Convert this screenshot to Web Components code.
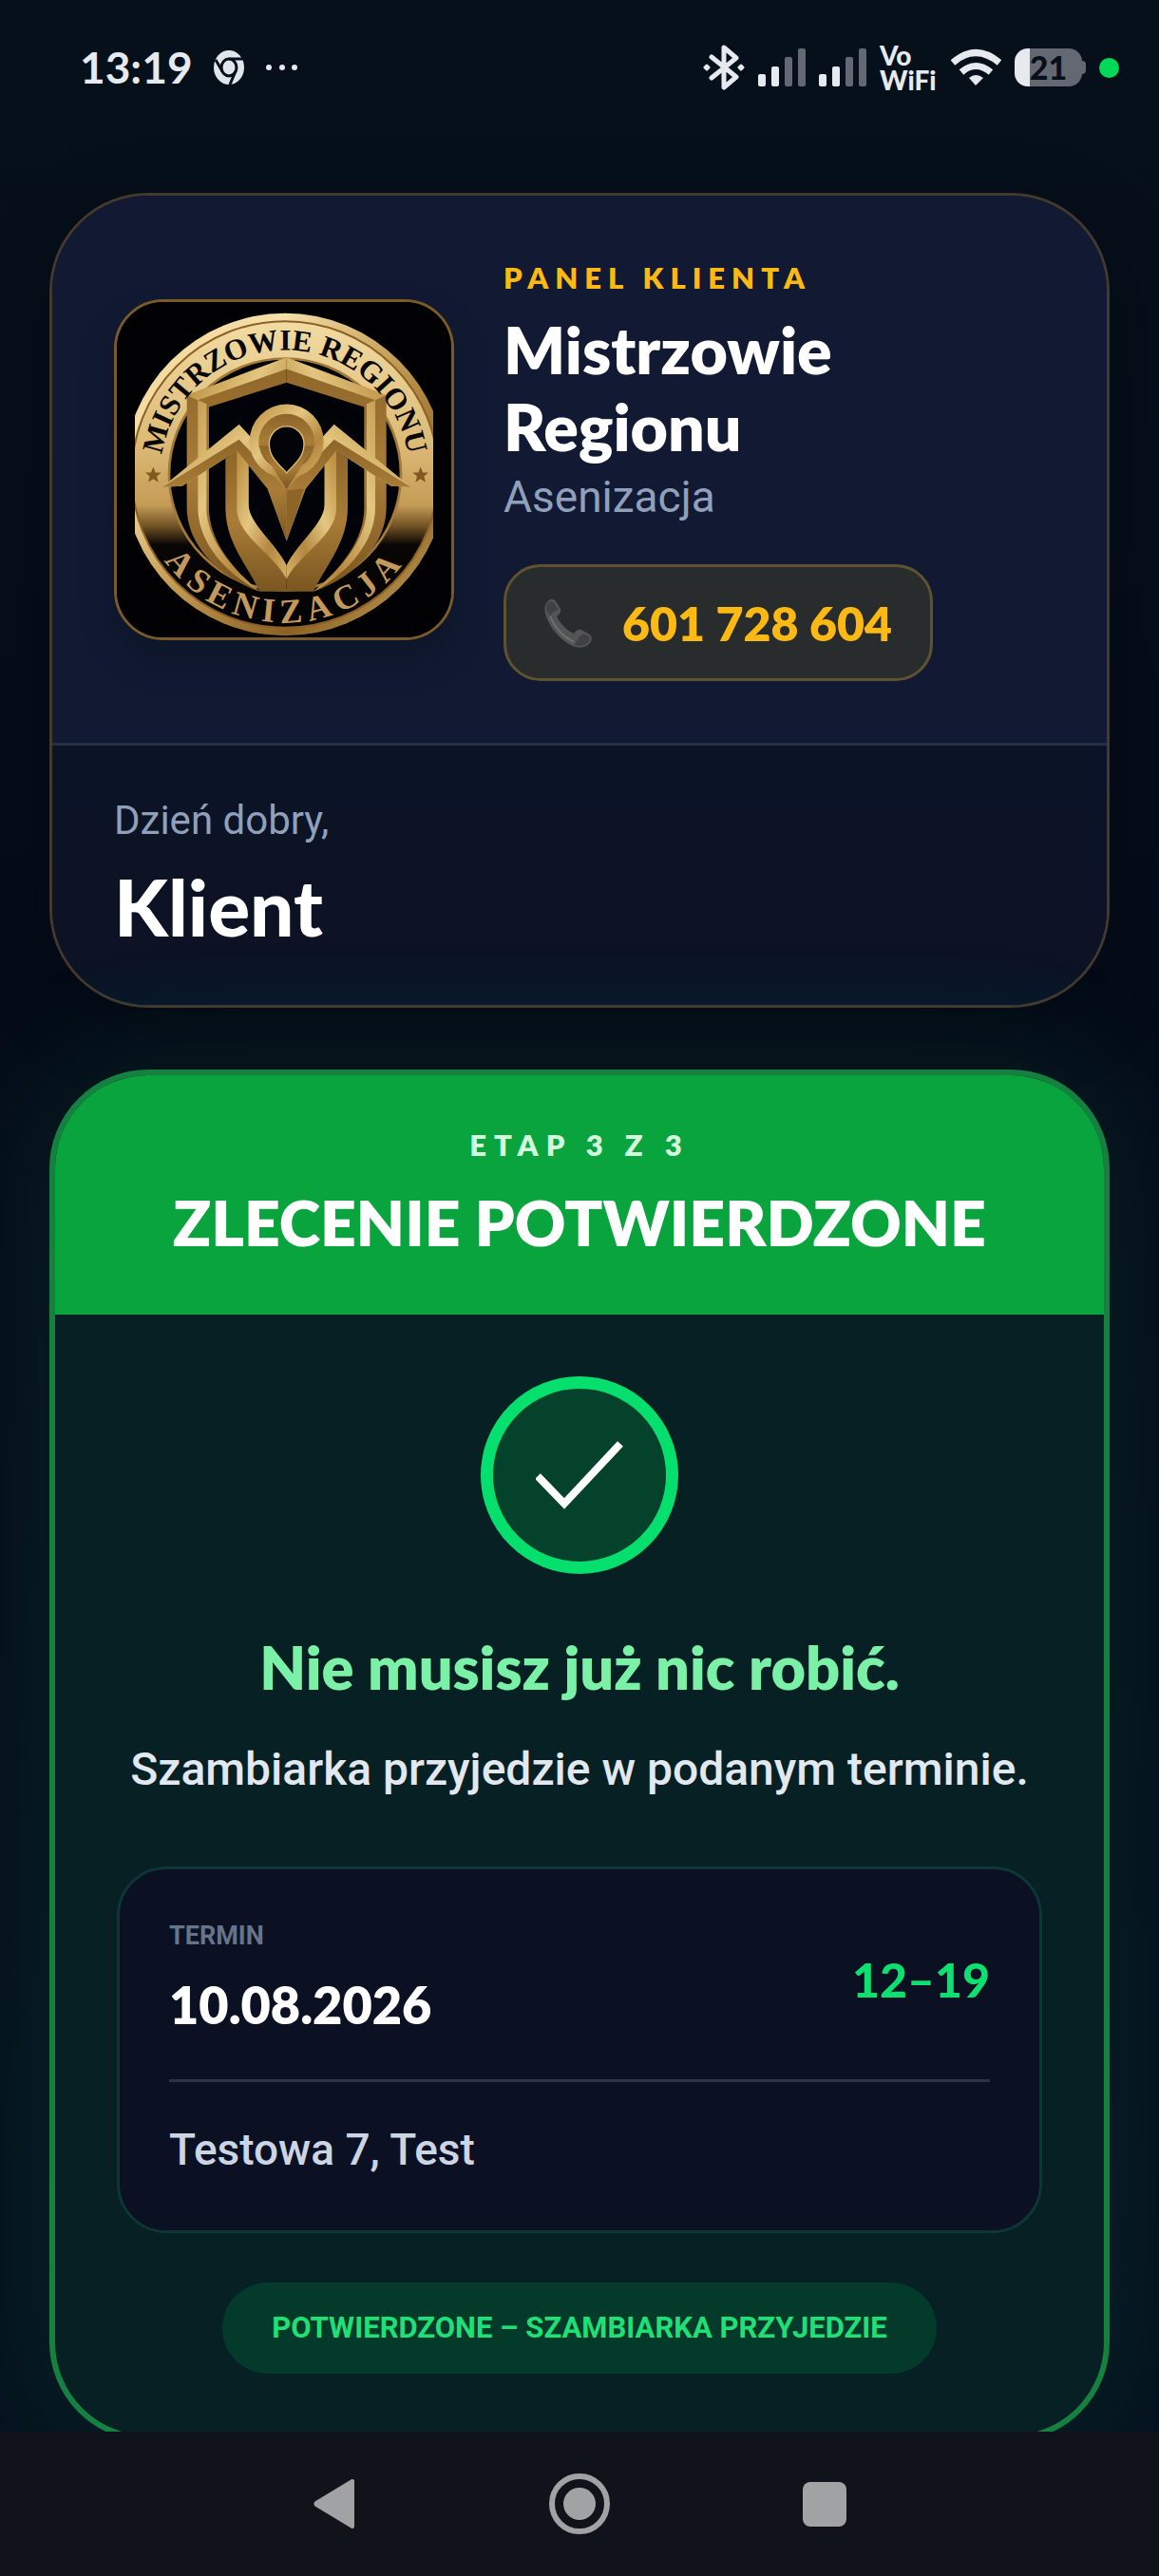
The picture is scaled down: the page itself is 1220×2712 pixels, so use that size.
<!DOCTYPE html>
<html lang="pl">
<head>
<meta charset="utf-8">
<meta name="viewport" content="width=device-width, initial-scale=1">
<title>Mistrzowie Regionu - panel klienta</title>
<style>
    html, body {
        height: 100%;
    }

    body {
        background: linear-gradient(#06101a, #040c19 40%, #04121f);
        color: #fff;
        display: flex;
        flex-direction: column;
        font-family: Lato, "Noto Sans", sans-serif;
        margin: 0;
        --text-font: Roboto, "Noto Sans", sans-serif;
    }

    main {
        display: flex;
        flex: 1;
        flex-direction: column;
        gap: 65px;
        min-height: 0;
        overflow-y: auto;
        padding: 61px 52px 0;
        scrollbar-width: none;
    }
</style>
</head>
<body>
<status-bar time="13:19" battery="21"></status-bar>
<main>
    <client-card phone="601 728 604">
        <brand-logo slot="logo"></brand-logo>
        <span slot="label">PANEL KLIENTA</span>
        <span slot="title">Mistrzowie Regionu</span>
        <span slot="subtitle">Asenizacja</span>
        <span slot="hello">Dzień dobry,</span>
        <span slot="name">Klient</span>
    </client-card>
    <stage-card>
        <span slot="step">ETAP 3 Z 3</span>
        <span slot="title">ZLECENIE POTWIERDZONE</span>
        <span slot="lead">Nie musisz już nic robić.</span>
        <span slot="text">Szambiarka przyjedzie w podanym terminie.</span>
        <visit-box slot="visit" date="10.08.2026" hours="12–19">Testowa 7, Test</visit-box>
        <span slot="badge">POTWIERDZONE – SZAMBIARKA PRZYJEDZIE</span>
    </stage-card>
</main>
<nav-bar></nav-bar>

<script>
class BaseElement extends HTMLElement {
    constructor() {
        super()
        this.attachShadow({ mode: 'open' });
    }

    render() {
        this.shadowRoot.innerHTML = `
            <style>
                * { box-sizing: border-box; margin: 0; }
                svg { display: block; }
                ${this.Css()}
            </style>
            ${this.HTML()}
        `;
    }

    connectedCallback() {
        this.render();
    }
}

// Top system bar
class StatusBar extends BaseElement {
    signal() {
        return `
        <svg width="50" height="40" viewBox="0 0 50 40" fill="#e6eaee">
            <rect x="0" y="27" width="8" height="13" rx="2"/>
            <rect x="14" y="19" width="8" height="21" rx="2"/>
            <rect x="28" y="9" width="8" height="31" rx="2" fill="#636873"/>
            <rect x="42" y="0" width="8" height="40" rx="2" fill="#636873"/>
        </svg>`
    }

    HTML() {
        return `
        <div class="side">
            <span class="time">${this.getAttribute('time')}</span>
            <svg width="32" height="38" viewBox="0 0 32 38">
                <ellipse cx="16" cy="19" rx="16" ry="18" fill="#e0e5ec"/>
                <g fill="none" stroke="#07101a" stroke-width="3">
                    <ellipse cx="16" cy="19" rx="8" ry="9"/>
                    <path d="M16 10H31M9 23L2 11M23 23L17 37"/>
                </g>
            </svg>
            <svg width="36" height="8" viewBox="0 0 36 8" fill="#e6eaee">
                <circle cx="4" cy="4" r="3"/><circle cx="18" cy="4" r="3"/><circle cx="31" cy="4" r="3"/>
            </svg>
        </div>
        <div class="side icons">
            <svg width="44" height="48" viewBox="0 0 44 48" fill="none" stroke="#e6eaee" stroke-width="5" stroke-linejoin="round" stroke-linecap="round">
                <path d="M9 13L35 34L22 45V3L35 14L9 35"/>
                <path d="M4 22L6 24L4 26L2 24ZM40 22L42 24L40 26L38 24Z" stroke-width="3" fill="#e6eaee"/>
            </svg>
            ${this.signal()}
            ${this.signal()}
            <span class="vowifi">Vo<br>WiFi</span>
            <svg width="53" height="40" viewBox="0 0 53 40" fill="none" stroke="#e6eaee" stroke-width="7">
                <path d="M2 15Q26 -6 51 15"/>
                <path d="M11 25Q26 12 42 25"/>
                <path d="M26 39L19 31Q26 25 34 31Z" fill="#e6eaee" stroke="none"/>
            </svg>
            <span class="battery">${this.getAttribute('battery')}</span>
            <span class="dot"></span>
        </div>
    `
    }

    Css() {
        return `
        :host {
            align-items: center;
            color: #e6eaee;
            display: flex;
            flex: none;
            height: 142px;
            justify-content: space-between;
            padding: 0 42px 0 84px;
            box-sizing: border-box;
        }
        .side { align-items: center; display: flex; gap: 22px; }
        .icons { gap: 14px; }
        .time { font: 700 46px/60px Lato, sans-serif; }
        .vowifi { font: 900 28px/26px Lato, sans-serif; width: 61px; }
        .battery {
            background: linear-gradient(90deg, #e6eaee 16px, #636873 16px);
            border-radius: 14px;
            color: #07101a;
            font: 900 34px/40px Lato, sans-serif;
            height: 40px;
            position: relative;
            text-align: center;
            width: 71px;
        }
        .battery::after {
            background: #636873;
            border-radius: 0 4px 4px 0;
            content: "";
            height: 14px;
            left: 70px;
            position: absolute;
            top: 13px;
            width: 5px;
        }
        .dot {
            background: #00d857;
            border-radius: 50%;
            height: 21px;
            margin-left: 4px;
            width: 21px;
        }
    `;
    }
}

// Round gold emblem on a black tile
class BrandLogo extends BaseElement {
    HTML() {
        return `
        <svg viewBox="69 52 1056 1056" role="img" aria-label="Mistrzowie Regionu Asenizacja">
            <defs>
                <linearGradient id="rim" x1="0" y1="0" x2="1" y2="1">
                    <stop offset="0" stop-color="#f0d496"/>
                    <stop offset=".25" stop-color="#f5dfa9"/>
                    <stop offset=".5" stop-color="#c39a51"/>
                    <stop offset=".75" stop-color="#8a6224"/>
                    <stop offset="1" stop-color="#d9b56c"/>
                </linearGradient>
                <linearGradient id="band" x1="0" y1="0" x2="0" y2="1">
                    <stop offset="0" stop-color="#f2dba2"/>
                    <stop offset=".4" stop-color="#dcba76"/>
                    <stop offset=".6" stop-color="#c49c56"/>
                    <stop offset=".67" stop-color="#6e5023"/>
                    <stop offset=".73" stop-color="#080604"/>
                    <stop offset="1" stop-color="#030304"/>
                </linearGradient>
                <linearGradient id="light" x1="0" y1="0" x2="1" y2="1">
                    <stop offset="0" stop-color="#b8893b"/>
                    <stop offset=".4" stop-color="#e3c680"/>
                    <stop offset=".7" stop-color="#b5873f"/>
                    <stop offset="1" stop-color="#d6b168"/>
                </linearGradient>
                <linearGradient id="dark" x1="0" y1="0" x2="0" y2="1">
                    <stop offset="0" stop-color="#8d6529"/>
                    <stop offset=".5" stop-color="#a97d38"/>
                    <stop offset="1" stop-color="#7a5520"/>
                </linearGradient>
                <clipPath id="crop"><rect x="126" y="52" width="942" height="1056"/></clipPath>
                <path id="star" d="M0 -26L7 -8L25 -8L11 4L16 23L0 12L-16 23L-11 4L-25 -8L-7 -8Z"/>
                <path id="top" d="M207 595A393 393 0 0 1 993 595"/>
                <path id="bottom" d="M132 595A468 468 0 0 0 1068 595"/>
                <g id="half">
                    <path fill="url(#dark)" d="M605 225L290 345V700C290 810 380 915 520 965C430 890 360 800 360 700V382L605 305Z"/>
                    <path fill="url(#light)" d="M605 225L290 345L325 360L605 262ZM325 360V700C325 800 400 900 520 965C430 890 352 800 352 700V372Z"/>
                    <path fill="url(#dark)" d="M412 545L450 518L485 560V690C485 750 570 810 605 882V965H520C480 880 412 810 412 700Z"/>
                    <path fill="url(#light)" d="M448 520L485 560V690C485 750 570 810 605 882V925C560 840 448 790 448 700Z"/>
                    <path fill="url(#light)" d="M212 635L455 437L605 600V805L545 640L448 520L275 632Z"/>
                    <path fill="url(#dark)" d="M212 635L455 485L605 642V805L545 640L448 520L275 632Z"/>
                </g>
            </defs>
            <rect x="60" y="40" width="1080" height="1080" fill="#010104"/>
            <g clip-path="url(#crop)">
                <circle cx="600" cy="595" r="509" fill="url(#rim)"/>
                <circle cx="600" cy="595" r="484" fill="url(#band)" stroke="#8d6126" stroke-width="6"/>
                <circle cx="600" cy="595" r="366" fill="#020308" stroke="#a3793a" stroke-width="8"/>
                <use href="#half"/>
                <use href="#half" transform="translate(1210 0) scale(-1 1)"/>
                <circle cx="605" cy="490" r="117" fill="url(#light)"/>
                <circle cx="605" cy="492" r="88" fill="url(#dark)"/>
                <path d="M517 505L605 642L693 505Z" fill="url(#dark)"/>
                <path d="M605 590C585 565 550 545 550 498A55 55 0 0 1 660 498C660 545 625 565 605 590Z" fill="#03040a" stroke="#e2bf78" stroke-width="4"/>
                <path d="M605 645L660 640L605 805Z" fill="#8d6529"/>
                <use href="#star" x="184" y="597" fill="#80591f"/>
                <use href="#star" x="1028" y="597" fill="#80591f"/>
            </g>
            <text font-size="94" fill="#090705" text-anchor="middle"><textPath href="#top" startOffset="50%">MISTRZOWIE REGIONU</textPath></text>
            <text class="wide" font-size="108" fill="#c49a5c" text-anchor="middle"><textPath href="#bottom" startOffset="50%">ASENIZACJA</textPath></text>
        </svg>
    `
    }

    Css() {
        return `
        :host {
            background: #010104;
            border: 3px solid #7a5b28;
            border-radius: 52px;
            box-shadow: 0 20px 40px rgba(0, 0, 0, .2);
            box-sizing: border-box;
            display: block;
            height: 359px;
            overflow: hidden;
            width: 358px;
        }
        svg { height: 100%; width: 100%; }
        text { font-family: "Liberation Serif", serif; font-weight: 700; }
        .wide { letter-spacing: 20px; }
    `;
    }
}

// Company data and greeting
class ClientCard extends BaseElement {
    HTML() {
        const phone = this.getAttribute('phone');
        return `
        <header>
            <slot name="logo"></slot>
            <div class="info">
                <p class="label"><slot name="label"></slot></p>
                <h1><slot name="title"></slot></h1>
                <p class="subtitle"><slot name="subtitle"></slot></p>
                <a href="tel:${phone.replace(/ /g, '')}">
                    <svg width="50" height="52" viewBox="0 0 50 52">
                        <path d="M3 4C6 0 9 0 12 3L17 11C18 14 16 17 13 19C17 27 23 33 31 37C33 34 36 32 39 33L48 38C51 42 50 45 47 48C42 53 33 53 24 47C12 39 4 27 1 16C0 11 0 7 3 4Z" fill="#535555"/>
                        <path d="M3 6C6 2 9 3 11 6L15 12C11 13 8 15 6 18C2 13 1 9 3 6ZM32 49C34 44 37 40 41 37L47 40C49 43 47 46 44 48C41 50 36 50 32 49Z" fill="#404142"/>
                        <path d="M6 19C11 31 19 40 31 46" fill="none" stroke="#6c6e6f" stroke-width="2"/>
                    </svg>
                    <span>${phone}</span>
                </a>
            </div>
        </header>
        <section>
            <p class="hello"><slot name="hello"></slot></p>
            <h2><slot name="name"></slot></h2>
        </section>
    `
    }

    Css() {
        return `
        :host {
            background: #0b1225;
            border: 3px solid #43392e;
            border-radius: 104px;
            box-shadow: 0 20px 80px rgba(0, 0, 0, .25);
            display: block;
            flex: none;
            overflow: hidden;
        }
        header {
            align-items: center;
            background: #111a32;
            border-bottom: 3px solid #243044;
            display: flex;
            gap: 52px;
            padding: 65px;
        }
        .info { flex: 1; }
        .label {
            color: #fdb913;
            font-size: 31px;
            font-weight: 800;
            letter-spacing: 7px;
            line-height: 42px;
            margin-bottom: 14px;
        }
        h1 {
            font-size: 68px;
            font-weight: 800;
            line-height: 81px;
            max-width: 460px;
        }
        .subtitle {
            color: #90a0bb;
            font-family: var(--text-font);
            font-size: 46px;
            line-height: 68px;
            margin-bottom: 37px;
        }
        a {
            align-items: center;
            background: #292c2d;
            border: 3px solid #5f5230;
            border-radius: 39px;
            color: #fdb913;
            display: inline-flex;
            font-size: 50px;
            font-weight: 800;
            gap: 32px;
            height: 123px;
            padding: 0 40px;
            text-decoration: none;
            vertical-align: top;
        }
        section {
            background: linear-gradient(#0a1426, #0d1224 75%, #081627);
            padding: 49px 65px 52px;
        }
        .hello {
            color: #90a0bb;
            font-family: var(--text-font);
            font-size: 42px;
            line-height: 60px;
            margin-bottom: 8px;
        }
        h2 {
            font-size: 82px;
            font-weight: 900;
            line-height: 104px;
        }
    `;
    }
}

// Date, hours and address of the visit
class VisitBox extends BaseElement {
    HTML() {
        return `
        <div class="row">
            <div>
                <p class="label">TERMIN</p>
                <p class="date">${this.getAttribute('date')}</p>
            </div>
            <p class="hours">${this.getAttribute('hours')}</p>
        </div>
        <p class="address"><slot></slot></p>
    `
    }

    Css() {
        return `
        :host {
            background: #0b1122;
            border: 3px solid #0d3736;
            border-radius: 52px;
            display: block;
            padding: 52px;
            text-align: left;
        }
        .row {
            align-items: center;
            border-bottom: 3px solid #2b3547;
            display: flex;
            justify-content: space-between;
            padding-bottom: 41px;
        }
        .label {
            color: #64748b;
            font-family: var(--text-font);
            font-size: 27px;
            font-weight: 700;
            line-height: 36px;
            margin-bottom: 18px;
        }
        .date, .hours {
            font-size: 54px;
            font-weight: 800;
            line-height: 74px;
        }
        .hours { color: #0be070; font-size: 50px; font-weight: 900; }
        .address {
            color: #cbd5e4;
            font-family: var(--text-font);
            font-size: 46px;
            font-weight: 500;
            line-height: 66px;
            padding-top: 38px;
        }
    `;
    }
}

// Order stage
class StageCard extends BaseElement {
    HTML() {
        return `
        <header>
            <p class="step"><slot name="step"></slot></p>
            <h2><slot name="title"></slot></h2>
        </header>
        <section>
            <div class="circle">
                <svg width="92" height="72" viewBox="0 0 92 72" fill="none" stroke="#fff" stroke-width="8">
                    <path d="M2 37L30 66L89 3"/>
                </svg>
            </div>
            <h3><slot name="lead"></slot></h3>
            <p class="text"><slot name="text"></slot></p>
            <slot name="visit"></slot>
            <p class="badge"><slot name="badge"></slot></p>
        </section>
    `
    }

    Css() {
        return `
        :host {
            background: #062024;
            border: 6px solid #15803f;
            border-radius: 104px;
            box-shadow: 0 0 130px 20px rgba(60, 180, 110, .1);
            display: block;
            flex: none;
            overflow: hidden;
            text-align: center;
        }
        header {
            background: #0aa43f;
            padding: 52px 40px 57px;
        }
        .step {
            color: #d5fbdf;
            font-size: 31px;
            font-weight: 800;
            letter-spacing: 8px;
            line-height: 42px;
            margin-bottom: 20px;
        }
        h2 {
            font-size: 66px;
            font-weight: 800;
            line-height: 81px;
        }
        section { padding: 65px; }
        .circle {
            align-items: center;
            background: #04422b;
            border: 13px solid #05df6e;
            border-radius: 50%;
            display: flex;
            height: 208px;
            justify-content: center;
            margin: 0 auto 57px;
            width: 208px;
        }
        h3 {
            color: #7bf1a8;
            font-size: 63px;
            font-weight: 800;
            line-height: 81px;
            margin-bottom: 31px;
        }
        .text {
            color: #e2e8f0;
            font-family: var(--text-font);
            font-size: 48px;
            font-weight: 500;
            line-height: 74px;
            margin-bottom: 65px;
        }
        .badge {
            background: #043a2a;
            border-radius: 52px;
            color: #1fe077;
            display: inline-block;
            font-family: var(--text-font);
            font-size: 31px;
            font-weight: 700;
            line-height: 96px;
            margin-top: 52px;
            padding: 0 52px;
            vertical-align: top;
        }
    `;
    }
}

// Bottom system buttons
class NavBar extends BaseElement {
    HTML() {
        return `
        <button aria-label="Wstecz">
            <svg width="44" height="54" viewBox="0 0 44 54" fill="#a1a2a4" stroke="#a1a2a4" stroke-width="4" stroke-linejoin="round">
                <path d="M41 3V51L3 28Q2 27 3 26Z"/>
            </svg>
        </button>
        <button aria-label="Ekran główny">
            <svg width="64" height="64" viewBox="0 0 64 64">
                <circle cx="32" cy="32" r="29" fill="none" stroke="#a1a2a4" stroke-width="6"/>
                <circle cx="32" cy="32" r="17" fill="#a1a2a4"/>
            </svg>
        </button>
        <button aria-label="Ostatnie">
            <svg width="46" height="47" viewBox="0 0 46 47"><rect width="46" height="47" rx="8" fill="#a1a2a4"/></svg>
        </button>
    `
    }

    Css() {
        return `
        :host {
            background: #10131a;
            display: flex;
            flex: none;
            height: 152px;
            justify-content: center;
            position: relative;
        }
        button {
            align-items: center;
            background: none;
            border: 0;
            display: flex;
            justify-content: center;
            width: 258px;
        }
    `;
    }
}

window.customElements.define('status-bar', StatusBar);
window.customElements.define('brand-logo', BrandLogo);
window.customElements.define('client-card', ClientCard);
window.customElements.define('visit-box', VisitBox);
window.customElements.define('stage-card', StageCard);
window.customElements.define('nav-bar', NavBar);
</script>
</body>
</html>
